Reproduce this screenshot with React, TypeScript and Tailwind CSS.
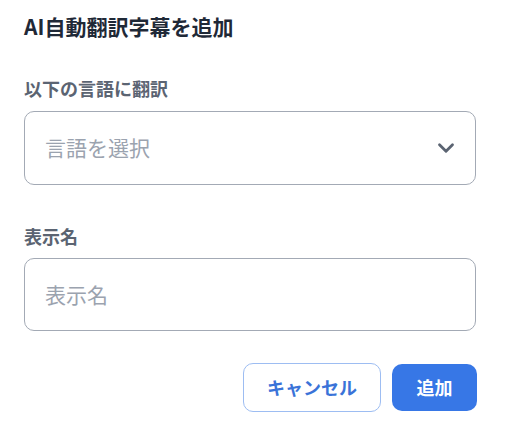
import { ChevronDown } from "lucide-react";

const font = { fontFamily: '"Noto Sans CJK JP", "Noto Sans", sans-serif' };

export default function App() {
  return (
    <div className="w-[508px] h-[439px] bg-white pl-6 pr-8 pt-3 flex flex-col" style={font}>
      {/* タイトル */}
      <h1 className="text-[21px] leading-[28px] font-bold text-[#1f2937]">AI自動翻訳字幕を追加</h1>

      {/* 言語選択 */}
      <label className="mt-9 text-[18px] leading-[24px] font-bold text-[#5b6472]">以下の言語に翻訳</label>
      <button className="mt-[11px] h-[74px] w-full rounded-[10px] border border-[#a3aab5] flex items-center justify-between pl-5 pr-4 text-left">
        <span className="text-[21px] text-[#9ba3af]">言語を選択</span>
        <ChevronDown className="w-[26px] h-[26px] text-[#5b6472]" strokeWidth={2.6} />
      </button>

      {/* 表示名 */}
      <label className="mt-[39px] text-[18px] leading-[24px] font-bold text-[#5b6472]">表示名</label>
      <div className="mt-[10px] h-[73px] w-full rounded-[10px] border border-[#a3aab5] flex items-center pl-5">
        <span className="text-[21px] text-[#9ba3af]">表示名</span>
      </div>

      {/* ボタン */}
      <div className="mt-8 flex justify-end items-center gap-[11px] -mr-px">
        <button className="w-[138px] h-[49px] rounded-[10px] border border-[#9dbdf2] text-[#3a73d8] text-[18px] font-bold">
          キャンセル
        </button>
        <button className="w-[85px] h-[47px] rounded-[10px] bg-[#3777e6] text-white text-[18px] font-bold">
          追加
        </button>
      </div>
    </div>
  );
}
